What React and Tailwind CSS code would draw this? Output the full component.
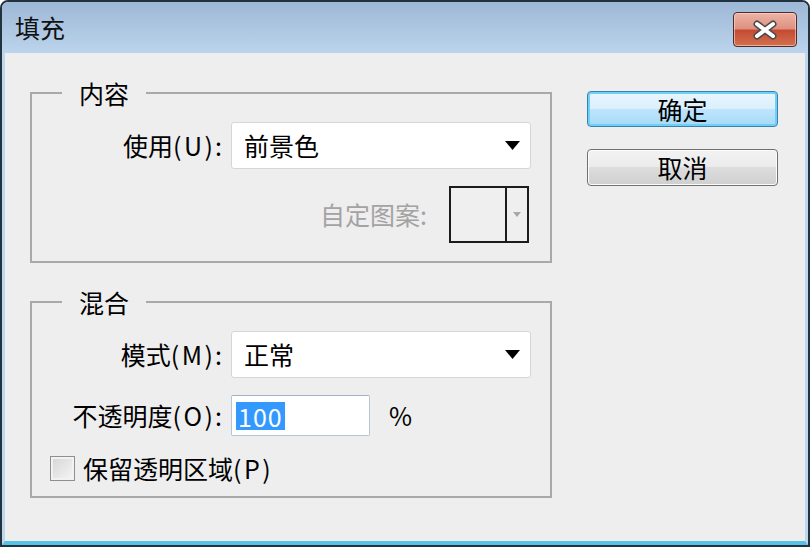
import React from "react";

function Caret() {
  return (
    <svg width="15" height="9" viewBox="0 0 15 9">
      <path d="M0 0h15L7.5 9z" fill="#000" />
    </svg>
  );
}

function Select({ value }) {
  return (
    <div className="flex h-[47px] w-[300px] items-center justify-between rounded-[3px] border border-[#d6d6d6] bg-white pl-[12px] pr-[10px]">
      <span>{value}</span>
      <Caret />
    </div>
  );
}

// label such as 使用(U): — the mnemonic part is spaced a little wider
function Label({ text, letter, colon = true }) {
  return (
    <span className="whitespace-nowrap">
      {text}
      <span className="tracking-[2.5px]">({letter}</span>)
      {colon && <span className="ml-[2px]">:</span>}
    </span>
  );
}

function Row({ label, children }) {
  return (
    <div className="flex items-center">
      <div className="w-[190px] text-right">{label}</div>
      <div className="ml-[9px] flex items-center">{children}</div>
    </div>
  );
}

function Group({ title, children, bottom }) {
  return (
    <fieldset className="w-[522px] border-2 border-[#a9a9a9] p-0">
      <legend className="ml-[30px] px-[17px] leading-[24px]">{title}</legend>
      <div className={`flex flex-col pt-[17px] ${bottom}`}>{children}</div>
    </fieldset>
  );
}

export default function App() {
  return (
    <div className="flex h-[547px] w-[810px] flex-col overflow-hidden rounded-t-[8px] border-2 border-[#22323f] bg-[#eeeeee] font-['Noto_Sans_CJK_SC','Microsoft_YaHei',sans-serif] text-[25px] text-black">
      {/* title bar */}
      <div className="flex h-[51px] shrink-0 justify-between bg-[linear-gradient(to_bottom,#9db8d6,#bcd4ec)]">
        <div className="flex items-center pl-[13px] text-[25px] leading-none text-[#111]">填充</div>
        <button className="mr-[11px] mt-[10px] flex h-[35px] w-[64px] items-center justify-center rounded-[4px] border border-[#4f2a2a] bg-[linear-gradient(to_bottom,#ecb3a6_0%,#de9180_48%,#c54a31_52%,#d2704f_100%)] shadow-[inset_0_0_0_1px_rgba(255,220,210,0.6)]">
          <svg width="28" height="20" viewBox="0 0 28 20">
            <path d="M6 4l16 12M22 4L6 16" stroke="#4a4a4a" strokeWidth="7" strokeLinecap="round" />
            <path d="M6 4l16 12M22 4L6 16" stroke="#fff" strokeWidth="4" strokeLinecap="round" />
          </svg>
        </button>
      </div>

      {/* body */}
      <div className="flex flex-1 items-start gap-[35px] border-x-[3px] border-b-[4px] border-x-[#bcd7ee] border-b-[#55c2e6] pl-[25px] pt-[28px]">
        <div className="flex flex-col gap-[27px]">
          <Group title="内容" bottom="pb-[18px] gap-[17px]">
            <Row label={<Label text="使用" letter="U" />}>
              <Select value="前景色" />
            </Row>
            <div className="flex items-center justify-end pr-[21px]">
              <span className="text-[#a3a3a3]">自定图案:</span>
              <div className="ml-[22px] flex h-[57px] w-[80px] border-2 border-[#1c1c1c] bg-[#efefef]">
                <div className="flex-1 border-r-2 border-[#1c1c1c]" />
                <div className="flex w-[20px] items-center justify-center">
                  <svg width="8" height="5" viewBox="0 0 8 5">
                    <path d="M0 0h8L4 5z" fill="#a8a8a8" />
                  </svg>
                </div>
              </div>
            </div>
          </Group>

          <Group title="混合" bottom="pb-[15px]">
            <Row label={<Label text="模式" letter="M" />}>
              <Select value="正常" />
            </Row>
            <div className="mt-[17px]">
              <Row label={<Label text="不透明度" letter="O" />}>
                <div className="flex h-[41px] w-[139px] items-center rounded-[2px] border border-[#b5c5d6] border-t-[#9fb2c7] bg-white pl-[4px]">
                  <span className="bg-[#3399ff] px-[2px] leading-[28px] tracking-[1px] text-white">100</span>
                </div>
                <span className="ml-[19px]">%</span>
              </Row>
            </div>
            <div className="mt-[20px] flex items-center pl-[18px]">
              <div className="h-[25px] w-[25px] border border-[#8e8f8f] bg-[linear-gradient(135deg,#d4d4d4,#f7f7f7)] shadow-[inset_0_0_0_2px_#f2f2f2]" />
              <span className="ml-[8px] leading-[25px]">
                <Label text="保留透明区域" letter="P" colon={false} />
              </span>
            </div>
          </Group>
        </div>

        <div className="flex flex-col gap-[22px] pt-[10px]">
          <button className="h-[36px] w-[191px] rounded-[4px] border border-[#3c7fb1] bg-[linear-gradient(to_bottom,#eaf6fd,#d9f0fc_50%,#bee6fd_50%,#a7d9f5)] leading-none shadow-[inset_0_0_0_2px_#6fd0f7]">
            确定
          </button>
          <button className="h-[37px] w-[191px] rounded-[4px] border border-[#707070] bg-[linear-gradient(to_bottom,#f2f2f2,#ebebeb_50%,#dddddd_50%,#cfcfcf)] leading-none shadow-[inset_0_0_0_1px_#fcfcfc]">
            取消
          </button>
        </div>
      </div>
    </div>
  );
}
